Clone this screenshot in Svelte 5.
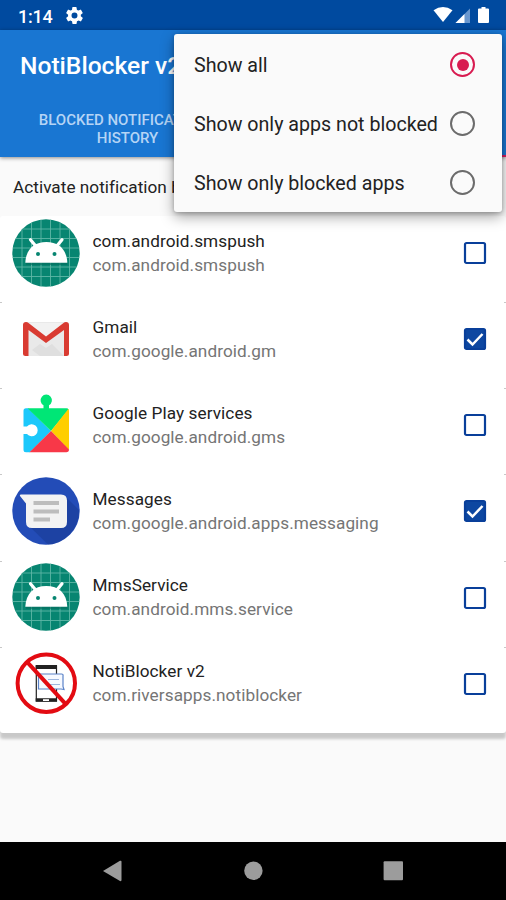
<script>
    let filter = "all";

    const filters = [
        {"id": "all", "label": "Show all"},
        {"id": "unblocked", "label": "Show only apps not blocked"},
        {"id": "blocked", "label": "Show only blocked apps"},
    ];

    let apps = [
        {"name": "com.android.smspush", "pkg": "com.android.smspush", "icon": "android", "blocked": false},
        {"name": "Gmail", "pkg": "com.google.android.gm", "icon": "gmail", "blocked": true},
        {"name": "Google Play services", "pkg": "com.google.android.gms", "icon": "play", "blocked": false},
        {"name": "Messages", "pkg": "com.google.android.apps.messaging", "icon": "messages", "blocked": true},
        {"name": "MmsService", "pkg": "com.android.mms.service", "icon": "android", "blocked": false},
        {"name": "NotiBlocker v2", "pkg": "com.riversapps.notiblocker", "icon": "blocker", "blocked": false},
    ];

    const gridLines = [10, 19.5, 29, 38.5, 48, 57.5];

    // half the length of a grid line that stays inside the round icon
    function chord(p) {
        return Math.sqrt(33.6 ** 2 - (p - 34) ** 2);
    }

    function toggle(app) {
        app.blocked = !app.blocked;
        apps = apps;
    }
</script>


<main>
    <div class="statusBar">
        <span class="clock">1:14</span>
        <svg class="gear" width="17" height="17" viewBox="2 2 20 20">
            <path fill="#fff" fill-rule="evenodd" d="M19.4 13a7.500 7.500 0 0 0 0-2l2.100-1.600a.5.5 0 0 0 .1-.6l-2-3.500a.5.5 0 0 0-.6-.2l-2.500 1a7.300 7.300 0 0 0-1.700-1l-.4-2.600a.5.5 0 0 0-.5-.5h-4a.5.5 0 0 0-.5.5L9.100 5.100a7.300 7.300 0 0 0-1.700 1l-2.500-1a.5.5 0 0 0-.6.2l-2 3.500a.5.5 0 0 0 .1.600L4.500 11a7.500 7.500 0 0 0 0 2l-2.100 1.600a.5.5 0 0 0-.1.600l2 3.500c.1.200.4.300.6.200l2.500-1a7.300 7.300 0 0 0 1.700 1l.4 2.600c0 .3.200.5.500.5h4c.3 0 .5-.2.5-.5l.4-2.600a7.300 7.300 0 0 0 1.700-1l2.500 1c.2.100.5 0 .6-.2l2-3.500a.5.5 0 0 0-.1-.600zM12 15.500a3.500 3.500 0 1 1 0-7 3.500 3.500 0 0 1 0 7z"/>
        </svg>
        <svg class="signals" width="58" height="18" viewBox="0 0 58 18">
            <path fill="#fff" d="M.5 4.200Q10 -2.200 19.500 4.200L10 16z"/>
            <path fill="#6997cf" d="M37 2.500V17H22.500z"/>
            <path fill="#fff" d="M31.500 8V17h-9z"/>
            <path fill="#fff" d="M48.500 1h4v1.500h2.500q1 0 1 1V16q0 1-1 1h-9q-1 0-1-1V3.500q0-1 1-1h2.500z"/>
        </svg>
    </div>

    <header>
        <h1>NotiBlocker v2</h1>
        <div class="tabs">
            <div class="tab">BLOCKED NOTIFICATIONS HISTORY</div>
            <div class="tab active"></div>
        </div>
    </header>

    <p class="hint">Activate notification b</p>

    <div class="list">
        {#each apps as app}
            <div class="row">
                <svg class="appIcon" width="68" height="68" viewBox="0 0 68 68">
                    {#if app.icon === "android"}
                        <circle cx="34" cy="34" r="33.700" fill="#078571"/>
                        <g stroke="#5eb5a6" stroke-width=".9">
                            {#each gridLines as p}
                                <path d="M{p} {34 - chord(p)}V{34 + chord(p)}M{34 - chord(p)} {p}H{34 + chord(p)}"/>
                            {/each}
                        </g>
                        <path fill="#056d5d" opacity=".6" d="M14 43h41.500v3H14z"/>
                        <path stroke="#fff" stroke-width="3.200" stroke-linecap="round" d="M18.500 20.800l5 6M50 20.800l-5 6"/>
                        <path fill="#fff" d="M13.300 43.800C14 30 22 23 34.300 23S54.700 30 55.300 43.800z"/>
                        <circle cx="26" cy="35" r="2" fill="#078571"/>
                        <circle cx="42.500" cy="35" r="2" fill="#078571"/>
                    {:else if app.icon === "gmail"}
                        <path fill="#e9e9e9" d="M13 17h42v34H13z"/>
                        <path fill="#dadada" d="M28 39l6 4 6-4 12 12H28L20 45z" opacity=".7"/>
                        <path fill="#f2f2f2" d="M16 18h36L34 33z"/>
                        <path fill="#d93b32" d="M11 20q0-3 3-3 1.500 0 2.500 1L34 31.500 51.500 18q1-1 2.500-1 3 0 3 3v28.500q0 2.500-2.500 2.500H52V25L34 38 16.500 25v26H13.500q-2.500 0-2.500-2.500z"/>
                    {:else if app.icon === "play"}
                        <path fill="#1cc8fb" d="M39 40L16 17.200H14q-2.500 0-2.500 2.500V35.500H15a6 6 0 1 1 0 7.500H11.500V58.700q0 2.500 2.500 2.500h4z"/>
                        <path fill="#00e676" d="M15.500 17.200H31.500V14.300a5.700 5.700 0 1 1 5.500 0V17.200H54.500q1.500 0 2.200 1.300L39 40z"/>
                        <path fill="#ffce00" d="M56.300 18q.7.7.7 2V59L39 40z"/>
                        <path fill="#f83848" d="M39 40L57 58.500q0 2.700-2.700 2.700H17.500z"/>
                    {:else if app.icon === "messages"}
                        <circle cx="34" cy="34" r="33.700" fill="#234cb7"/>
                        <path fill="#17378c" opacity=".45" d="M54 20L67 33A33.500 33.500 0 0 1 36 67.500L17 49z"/>
                        <path fill="#f3f3f3" d="M9 17.500H49q6 0 6 6V45q0 6-6 6H20q-6 0-6-6V26.500L8 19q-.5-1.500 1-1.500z"/>
                        <path fill="#bdbdbd" d="M21.500 24h25.500v4H21.500zM21.500 32.500h25.500v4H21.500zM21.500 40.500h16.500v4H21.500z"/>
                    {:else}
                        <path fill="#fff" stroke="#222" stroke-width="1.200" d="M24.300 17h20.200v35H24.300z"/>
                        <path fill="#222" d="M23.700 16H45v4H23.700zM23.700 49.300H45v3.500H23.700z"/>
                        <path fill="#fff" d="M31 50.200h6v1.800h-6z"/>
                        <path fill="#f6f9ff" stroke="#5a82c8" stroke-width="1.200" d="M26.500 25h23q2 0 1.500 2V37.500l1 3-3-.5H26.500z"/>
                        <path stroke="#9eb6df" stroke-width="1.200" d="M36 30.500h11M37 35.500h11"/>
                        <circle cx="34.300" cy="34.200" r="28.700" fill="none" stroke="#e30b12" stroke-width="4"/>
                        <path stroke="#e30b12" stroke-width="4" d="M15 12.800l38.500 42"/>
                    {/if}
                </svg>
                <div class="names">
                    <div class="name">{app.name}</div>
                    <div class="pkg">{app.pkg}</div>
                </div>
                <svg class="checkbox" width="24" height="24" viewBox="0 0 24 24" on:click="{() => toggle(app)}">
                    <rect x="2" y="2" width="20" height="20" rx="1.500" stroke="#093f9a" stroke-width="2.200" fill={app.blocked ? "#0d47a1" : "none"}/>
                    {#if app.blocked}
                        <path d="M4.500 12.500l5 5L19.500 7" fill="none" stroke="#fff" stroke-width="2.500"/>
                    {/if}
                </svg>
            </div>
        {/each}
    </div>

    <nav>
        <svg width="20" height="22" viewBox="0 0 20 22"><path fill="#9c9c9c" d="M0 11L17 .8q1.500-.6 1.500 1V20q0 1.600-1.500 1z"/></svg>
        <svg width="20" height="22" viewBox="0 0 20 22"><circle cx="10.400" cy="10.800" r="9.200" fill="#9c9c9c"/></svg>
        <svg width="20" height="22" viewBox="0 0 20 22"><rect x=".6" y="1.300" width="19.400" height="19" rx="1" fill="#9c9c9c"/></svg>
    </nav>

    <div class="menu">
        {#each filters as item}
            <div class="menuItem" on:click="{() => filter = item.id}">
                <span>{item.label}</span>
                <span class="radio" class:selected={filter === item.id}></span>
            </div>
        {/each}
    </div>
</main>


<style>
    :global(body) {
        background-color: #fafafa;
    }

    main {
        position: relative;
        display: flex;
        flex-direction: column;
        width: 506px;
        height: 900px;
        overflow: hidden;
        background-color: #fafafa;
        font-family: Roboto, sans-serif;
    }

    .statusBar {
        display: flex;
        align-items: center;
        box-sizing: border-box;
        height: 30px;
        padding: 0 15px 0 18px;
        background-color: #004a9f;
    }

    .clock {
        width: 48px;
        padding-top: 2px;
        color: #fff;
        font-size: 18px;
        font-weight: 500;
        letter-spacing: -.2px;
    }

    .signals {
        margin-left: auto;
    }

    header {
        box-sizing: border-box;
        height: 127px;
        background-color: #1976d2;
        box-shadow: 0 1px 4px rgba(0, 0, 0, .45);
        z-index: 1;
    }

    h1 {
        margin: 0;
        height: 69px;
        padding-left: 20px;
        line-height: 71px;
        color: #fff;
        font-size: 24.600px;
        font-weight: 500;
    }

    .tabs {
        display: grid;
        grid-template-columns: 1fr 1fr;
        height: 58px;
    }

    .tab {
        box-sizing: border-box;
        padding: 12px 29px 0 31px;
        color: #b5d4f5;
        font-size: 15px;
        font-weight: 500;
        line-height: 18px;
        text-align: center;
    }

    .tab.active {
        border-bottom: 2px solid #d81b60;
    }

    .hint {
        margin: 0;
        height: 59px;
        padding-left: 13px;
        line-height: 61px;
        color: #222;
        font-size: 17.200px;
        letter-spacing: .03px;
        white-space: nowrap;
    }

    .list {
        height: 517px;
        border-radius: 3px;
        background-color: #fff;
        box-shadow: 0 6px 3px rgba(0, 0, 0, .2);
        display: grid;
        grid-template-rows: repeat(6, 1fr);
    }

    .row {
        display: flex;
        align-items: flex-start;
        padding: 0 19px 0 12px;
    }

    .row + .row {
        background:
            linear-gradient(#c8c8c8, #c8c8c8) left top / 2px 1px no-repeat,
            linear-gradient(#c8c8c8, #c8c8c8) right top / 2px 1px no-repeat;
    }

    .appIcon {
        margin-top: 2.500px;
    }

    .names {
        flex: 1;
        margin: 12.500px 0 0 12.500px;
        line-height: 24px;
        font-size: 17.200px;
        letter-spacing: .07px;
    }

    .name {
        color: #222;
    }

    .pkg {
        color: #757575;
    }

    .checkbox {
        margin-top: 25px;
    }

    nav {
        display: flex;
        justify-content: space-between;
        align-items: center;
        box-sizing: border-box;
        height: 58px;
        margin-top: auto;
        padding: 0 103px;
        background-color: #000;
    }

    /* Overflow menu, floats above the toolbar */
    .menu {
        position: absolute;
        top: 34px;
        left: 174px;
        box-sizing: border-box;
        width: 328px;
        height: 178px;
        padding-top: 1px;
        border-radius: 3px;
        background-color: #fafafa;
        box-shadow: 0 5px 14px rgba(0, 0, 0, .35), 0 1px 4px rgba(0, 0, 0, .25);
        z-index: 2;
    }

    .menuItem {
        display: flex;
        justify-content: space-between;
        align-items: center;
        height: 59px;
        padding: 0 27px 0 20px;
        color: #222;
        font-size: 19.650px;
        white-space: nowrap;
    }

    .menuItem span:first-child {
        padding-top: 2px;
    }

    .radio {
        display: grid;
        place-items: center;
        box-sizing: border-box;
        width: 25px;
        height: 25px;
        border: 2px solid #6b6b6b;
        border-radius: 50%;
    }

    .radio.selected {
        border-color: #d81b50;
    }

    .radio.selected::after {
        content: "";
        width: 12px;
        height: 12px;
        border-radius: 50%;
        background-color: #d81b50;
    }
</style>
